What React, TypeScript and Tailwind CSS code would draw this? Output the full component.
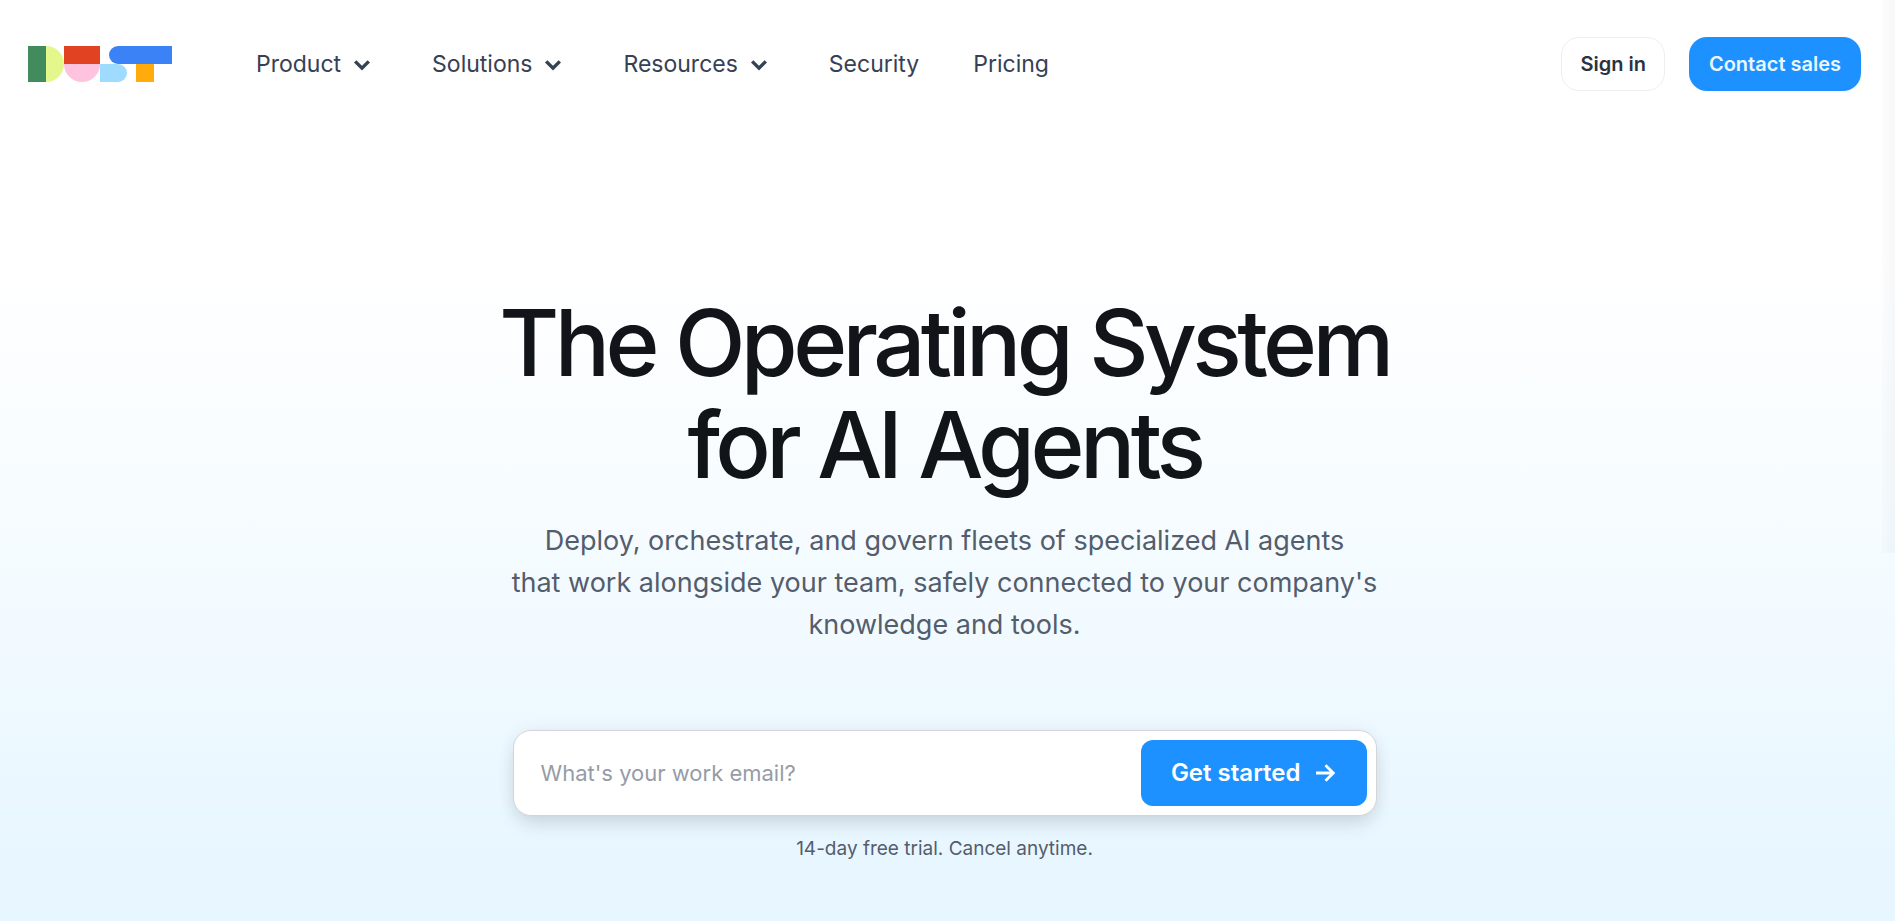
import { useState } from "react";
import type { FormEvent } from "react";

type NavItem = {
  label: string;
  hasMenu?: boolean;
};

const nav: NavItem[] = [
  { label: "Product", hasMenu: true },
  { label: "Solutions", hasMenu: true },
  { label: "Resources", hasMenu: true },
  { label: "Security" },
  { label: "Pricing" },
];

function Logo() {
  return (
    <svg viewBox="0 0 96 24" className="h-9 w-36" aria-hidden="true">
      <path d="M12 0a12 12 0 0 1 0 24z" fill="#E2F78C" />
      <path d="M0 0h12v24H0z" fill="#418B5C" />
      <path d="M24 12h24a12 12 0 0 1-24 0z" fill="#FFC3DF" />
      <path d="M24 0h24v12H24z" fill="#E14322" />
      <path d="M48 12h12a6 6 0 0 1 0 12H48z" fill="#9FDBFF" />
      <path d="M60 0h36v12H60a6 6 0 0 1 0-12z" fill="#3B82F6" />
      <path d="M72 12h12v12H72z" fill="#FFAA0D" />
    </svg>
  );
}

function Chevron() {
  return (
    <svg viewBox="0 0 18 18" className="h-[18px] w-[18px]" fill="none" aria-hidden="true">
      <path d="M2.2 6.4 9 13.2l6.8-6.8" stroke="currentColor" strokeWidth="3.4" />
    </svg>
  );
}

function Header() {
  return (
    <header className="flex h-32 items-center justify-between px-7">
      <div className="flex items-center gap-21">
        <a href="#" aria-label="Dust">
          <Logo />
        </a>
        <nav className="flex items-center gap-[54px] text-[23px] leading-8 text-[#364153]">
          {nav.map((item) =>
            item.hasMenu ? (
              <button key={item.label} type="button" className="mr-[7px] flex items-center gap-3">
                {item.label}
                <Chevron />
              </button>
            ) : (
              <a key={item.label} href="#">
                {item.label}
              </a>
            ),
          )}
        </nav>
      </div>

      <div className="flex items-center gap-6 text-[20px] leading-7 font-semibold">
        <button
          type="button"
          className="h-[54px] rounded-[18px] border border-[#eeeeef] bg-white px-[18px] text-[#2a3241]"
        >
          Sign in
        </button>
        <button type="button" className="h-[54px] rounded-[18px] bg-[#1c91ff] px-5 text-[#e9f7ff]">
          Contact sales
        </button>
      </div>
    </header>
  );
}

function EmailForm() {
  const [email, setEmail] = useState("");
  const onSubmit = (e: FormEvent) => e.preventDefault();

  return (
    <form
      onSubmit={onSubmit}
      className="flex w-full max-w-[864px] items-center rounded-[18px] border border-[#d3d5d9] bg-white p-[9px] shadow-[0_10px_20px_-4px_rgba(17,20,24,0.14),0_0_18px_rgba(17,20,24,0.05)]"
    >
      <input
        type="email"
        aria-label="Work email"
        value={email}
        onChange={(e) => setEmail(e.target.value)}
        placeholder="What's your work email?"
        className="min-w-0 flex-1 bg-transparent px-[18px] text-[22px] leading-8 text-[#111418] outline-none placeholder:text-[#969ca7]"
      />
      <button
        type="submit"
        className="flex h-[66px] items-center gap-3 rounded-xl bg-[#1c91ff] px-[30px] text-[24px] font-semibold text-white"
      >
        Get started
        <svg viewBox="0 0 24 24" className="h-6 w-6" fill="none" aria-hidden="true">
          <path d="M3 12h17M12.5 4.2l7.8 7.8-7.8 7.8" stroke="currentColor" strokeWidth="2.8" />
        </svg>
      </button>
    </form>
  );
}

export default function App() {
  return (
    <div className="relative min-h-screen overflow-hidden bg-linear-to-b from-white from-28% via-[#f4fbff] via-62% to-[#e7f6ff] to-95% pr-1.5 font-['Inter','Liberation_Sans',sans-serif]">
      <Header />
      <main className="flex flex-col items-center px-7 pt-[164px] text-center">
        <h1 className="text-[92px] leading-[102px] font-medium tracking-tighter text-[#111418]">
          The Operating System
          <br />
          for AI Agents
        </h1>
        <p className="mt-6 text-[27px] leading-[42px] text-[#545d6c]">
          Deploy, orchestrate, and govern fleets of specialized AI agents
          <br />
          that work alongside your team, safely connected to your company's
          <br />
          knowledge and tools.
        </p>
        <div className="mt-21 flex w-full justify-center">
          <EmailForm />
        </div>
        <p className="mt-[18px] text-[19px] leading-[30px] text-[#545d6c]">14-day free trial. Cancel anytime.</p>
      </main>

      <div className="pointer-events-none absolute top-0 right-0 h-3/5 w-[13px] bg-linear-to-r from-black/1 to-black/3" />
    </div>
  );
}
